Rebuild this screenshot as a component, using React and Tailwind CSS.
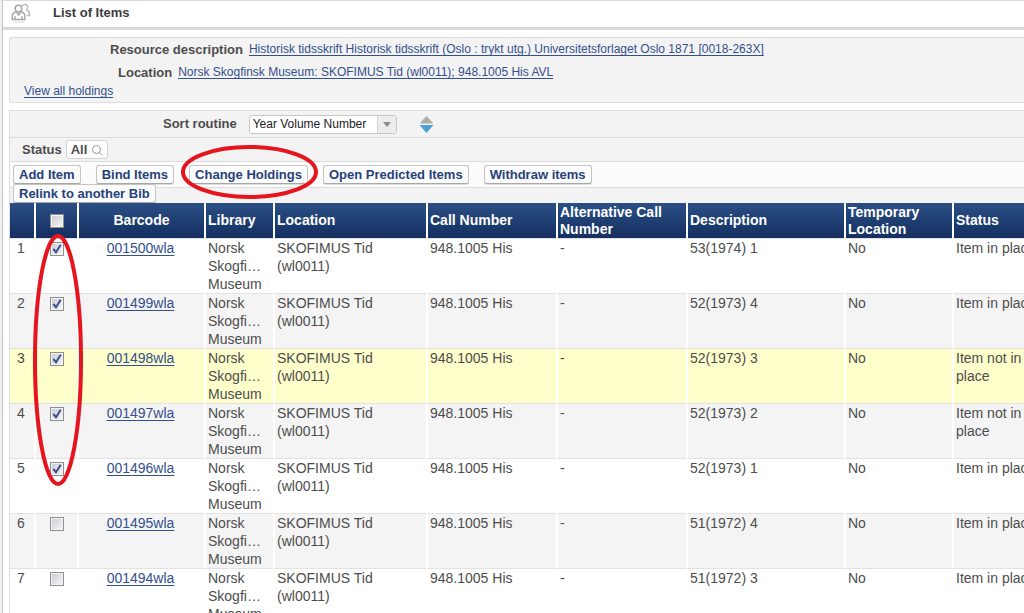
import { Search } from 'lucide-react';

const items = [
    { barcode: '001500wla', description: '53(1974) 1', status: 'Item in place', checked: true },
    { barcode: '001499wla', description: '52(1973) 4', status: 'Item in place', checked: true },
    { barcode: '001498wla', description: '52(1973) 3', status: 'Item not in place', checked: true, active: true },
    { barcode: '001497wla', description: '52(1973) 2', status: 'Item not in place', checked: true },
    { barcode: '001496wla', description: '52(1973) 1', status: 'Item in place', checked: true },
    { barcode: '001495wla', description: '51(1972) 4', status: 'Item in place', checked: false },
    { barcode: '001494wla', description: '51(1972) 3', status: 'Item in place', checked: false },
];

const headings = [
    'Library',
    'Location',
    'Call Number',
    'Alternative Call Number',
    'Description',
    'Temporary Location',
    'Status',
];

const cell = 'border-l-2 border-l-white border-t border-t-[#e2e2e2] pl-0.5 pr-px align-top';

function rowColor(item, index) {
    if (item.active) return 'bg-[#ffffcc]';
    return index % 2 ? 'bg-[#f4f4f4]' : 'bg-white';
}

function PatronsIcon() {
    return (
        <svg className="h-6 w-5" viewBox="0 0 20 24" fill="none" stroke="#a6a6a6" strokeWidth="1.5" aria-hidden="true">
            <g stroke="#bcbcbc">
                <path d="M11 5.200c.5-1.100 1.500-1.700 2.700-1.700 1.700 0 3 1.300 3 3 0 1.100-.5 1.900-1.200 2.500" />
                <path d="M15.500 9.200c2 .5 3 1.500 3 3.300v2h-2.800" />
            </g>
            <circle cx="7.500" cy="7.500" r="3.300" />
            <path d="M5.300 10.800c-2.800.7-4 2.200-4 4.700v3h12.600v-3c0-2.500-1.300-4-4-4.700L7.600 14z" />
            <path d="M4.200 15.300v2.500M11 15.300v2.500" />
            <path d="M2 21h11.500" stroke="#e6e6e6" />
        </svg>
    );
}

function Checkbox({ label, defaultChecked }) {
    return (
        <label className="relative block size-[14px]">
            <input
                type="checkbox"
                aria-label={label}
                defaultChecked={defaultChecked}
                className="peer block size-[14px] appearance-none border border-[#8e8f8f] bg-linear-to-br from-[#c9ccd2] to-[#f6f6f6] shadow-[inset_0_0_0_1px_#f4f4f4]"
            />
            <svg
                className="pointer-events-none absolute inset-0 hidden peer-checked:block"
                viewBox="0 0 14 14"
                fill="none"
                stroke="#3d4f91"
                strokeWidth="2"
                aria-hidden="true"
            >
                <path d="M3.300 6.800l2.700 3.400 4.700-7.400" />
            </svg>
        </label>
    );
}

function ActionButton({ children }) {
    return (
        <button
            type="button"
            className="h-[19px] whitespace-nowrap rounded-[3px] border border-[#c4c4c4] border-b-[#a8a8a8] bg-[#fcfcfc] px-[5px] text-[13px] leading-[18px] font-bold text-[#27417a] shadow-[0_1px_0_#dddddd]"
        >
            {children}
        </button>
    );
}

function Ring({ className, viewBox, cx, cy }) {
    return (
        <svg className={className} viewBox={viewBox} fill="none" stroke="#e5141d" strokeWidth="4" aria-hidden="true">
            <ellipse cx={cx} cy={cy} rx={cx - 2} ry={cy - 2} />
        </svg>
    );
}

export default function App() {
    return (
        <div className="h-screen overflow-hidden bg-[#f1f1f4] pl-0.5 font-['Liberation_Sans',Arial,sans-serif] text-[#4d4d4d]">
            <div className="min-h-full border-l border-t border-l-[#c3c3c8] border-t-[#dddddd] bg-white">
                <header className="flex h-[29px] items-start gap-[22px] border-b-3 border-[#d9d9d9] pl-2">
                    <PatronsIcon />
                    <h1 className="text-[13px] leading-[23px] font-bold text-[#3c3c3c]">List of Items</h1>
                </header>

                <main className="pl-1.5 pt-[7px]">
                    <section className="h-[66px] rounded-l-[3px] border border-r-0 border-[#dcdcdc] bg-[#f3f3f3] text-[12px] text-[#34508c]">
                        <div className="flex items-center gap-1.5 pl-[100px] leading-[23px]">
                            <span className="text-[13px] font-bold text-[#4d4d4d]">Resource description</span>
                            <a href="#resource" className="underline underline-offset-2">
                                Historisk tidsskrift Historisk tidsskrift (Oslo : trykt utg.) Universitetsforlaget Oslo 1871 [0018-263X]
                            </a>
                        </div>
                        <div className="flex items-center gap-1.5 pl-[108px] leading-[23px]">
                            <span className="text-[13px] font-bold text-[#4d4d4d]">Location</span>
                            <a href="#location" className="underline underline-offset-2">
                                Norsk Skogfinsk Museum: SKOFIMUS Tid (wl0011); 948.1005 His AVL
                            </a>
                        </div>
                        <a href="#holdings" className="block pl-3.5 leading-[15px] underline underline-offset-2">
                            View all holdings
                        </a>
                    </section>

                    <section className="mt-[7px] border-l border-t border-[#dcdcdc] bg-[#f3f3f3]">
                        <div className="flex h-[27px] items-center border-b border-[#dcdcdc] pl-[153px]">
                            <label htmlFor="sort" className="mr-3 text-[13px] font-bold">
                                Sort routine
                            </label>
                            <div className="flex">
                                <div className="relative">
                                    <select
                                        id="sort"
                                        className="block h-[19px] w-[148px] appearance-none rounded-[3px] border border-[#c8c8c8] bg-white pl-[3px] text-[12px] leading-[17px] text-[#222222]"
                                    >
                                        <option>Year Volume Number</option>
                                    </select>
                                    <span className="pointer-events-none absolute inset-y-px right-px flex w-[19px] items-center justify-center rounded-r-[2px] border-l border-[#d0d0d0] bg-[#ececec]">
                                        <svg className="h-[5px] w-2" viewBox="0 0 8 5" fill="#8a8a8a" aria-hidden="true">
                                            <path d="M0 0h8L4 5z" />
                                        </svg>
                                    </span>
                                </div>
                                <button type="button" aria-label="Toggle sort order" className="ml-[22px]">
                                    <svg className="h-[19px] w-[15px]" viewBox="0 0 15 19" aria-hidden="true">
                                        <path d="M7.500 1L14.500 8.500H.5z" fill="#b0acac" />
                                        <path d="M.5 10h14l-7 8z" fill="#4aa0d4" />
                                    </svg>
                                </button>
                            </div>
                        </div>

                        <div className="flex h-6 items-center gap-1 border-b border-[#dcdcdc] pl-3">
                            <span className="text-[13px] font-bold">Status</span>
                            <button
                                type="button"
                                className="flex h-[19px] items-center gap-1 rounded-[3px] border border-[#d0d4d8] bg-[#fdfdfd] px-1 text-[13px] font-bold"
                            >
                                All
                                <Search className="size-3 text-[#999999]" strokeWidth={2} />
                            </button>
                        </div>

                        <div className="flex h-[26px] items-start gap-[15px] border-b border-[#dcdcdc] bg-[#fcfcfc] pl-[3px] pt-[3px]">
                            <ActionButton>Add Item</ActionButton>
                            <ActionButton>Bind Items</ActionButton>
                            <div className="relative flex">
                                <ActionButton>Change Holdings</ActionButton>
                                <Ring
                                    className="pointer-events-none absolute -left-2 -top-5 z-10 h-[54px] w-[137px]"
                                    viewBox="0 0 137 54"
                                    cx={68.5}
                                    cy={27}
                                />
                            </div>
                            <ActionButton>Open Predicted Items</ActionButton>
                            <ActionButton>Withdraw items</ActionButton>
                        </div>
                        <div className="relative -mt-1 flex h-[19px] items-start pl-[3px]">
                            <ActionButton>Relink to another Bib</ActionButton>
                        </div>
                    </section>

                    <section className="relative overflow-hidden border-l border-[#dcdcdc]">
                        <table className="w-full min-w-[1039px] table-fixed border-separate border-spacing-0 text-[14px] leading-[18px]">
                            <colgroup>
                                <col className="w-6" />
                                <col className="w-[43px]" />
                                <col className="w-[127px]" />
                                <col className="w-[69px]" />
                                <col className="w-[153px]" />
                                <col className="w-[130px]" />
                                <col className="w-[130px]" />
                                <col className="w-[158px]" />
                                <col className="w-[108px]" />
                                <col />
                            </colgroup>
                            <thead className="text-left leading-[17px] text-white">
                                <tr className="h-[35px] bg-linear-to-b from-[#2a4f85] to-[#152f60]">
                                    <th aria-label="Row" />
                                    <th className="border-l-2 border-white">
                                        <div className="flex justify-center">
                                            <Checkbox label="Select all items" />
                                        </div>
                                    </th>
                                    <th className="border-l-2 border-white text-center">Barcode</th>
                                    {headings.map((heading) => (
                                        <th key={heading} className="border-l-2 border-white pl-0.5">
                                            {heading}
                                        </th>
                                    ))}
                                </tr>
                            </thead>
                            <tbody>
                                {items.map((item, index) => (
                                    <tr key={item.barcode} className={rowColor(item, index)}>
                                        <td className="border-t border-[#e2e2e2] pr-0.5 text-center align-top">{index + 1}</td>
                                        <td className="border-l-2 border-l-white border-t border-t-[#e2e2e2] align-top">
                                            <div className="flex justify-center pt-[3px]">
                                                <Checkbox label={`Select ${item.barcode}`} defaultChecked={item.checked} />
                                            </div>
                                        </td>
                                        <td className="border-l-2 border-l-white border-t border-t-[#e2e2e2] pr-0.5 text-center align-top">
                                            <a href={`#${item.barcode}`} className="text-[#34508c] underline underline-offset-2">
                                                {item.barcode}
                                            </a>
                                        </td>
                                        <td className={cell}>Norsk Skogfi… Museum</td>
                                        <td className={cell}>SKOFIMUS Tid (wl0011)</td>
                                        <td className={cell}>948.1005 His</td>
                                        <td className={cell}>-</td>
                                        <td className={cell}>{item.description}</td>
                                        <td className={cell}>No</td>
                                        <td className={cell}>{item.status}</td>
                                    </tr>
                                ))}
                            </tbody>
                        </table>
                        <Ring
                            className="pointer-events-none absolute left-[23px] top-[31px] h-[252px] w-[50px]"
                            viewBox="0 0 50 252"
                            cx={25}
                            cy={126}
                        />
                    </section>
                </main>
            </div>
        </div>
    );
}
